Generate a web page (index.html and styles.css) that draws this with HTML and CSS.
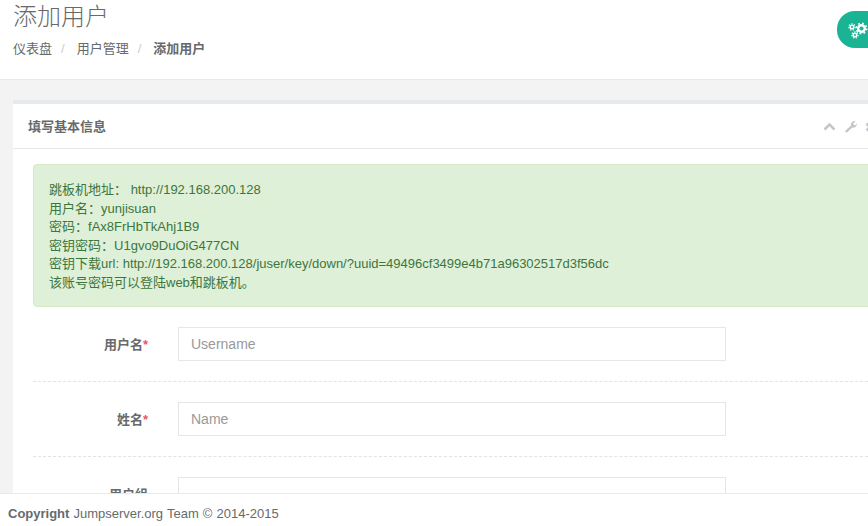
FILE: index.html
```html
<!DOCTYPE html>
<html lang="zh-CN">
<head>
<meta charset="utf-8">
<title>添加用户</title>
<link rel="stylesheet" href="styles.css">
</head>
<body>
<div class="page">
  <header class="heading">
    <h2 class="title">添加用户</h2>
    <ol class="crumbs">
      <li>仪表盘</li>
      <li class="sep">/</li>
      <li>用户管理</li>
      <li class="sep">/</li>
      <li class="current">添加用户</li>
    </ol>
    <div class="gear-btn">
      <svg class="gear-icon" width="20" height="20" viewBox="0 0 20 20">
        <g fill="none" stroke="#fff">
          <circle cx="13.5" cy="8.500" r="3.300" stroke-width="2.400"/>
          <circle cx="13.5" cy="8.500" r="5.200" stroke-width="1.600" stroke-dasharray="1.800 2.280"/>
          <circle cx="4" cy="7" r="1.800" stroke-width="1.400"/>
          <circle cx="4" cy="7" r="3.100" stroke-width="1.200" stroke-dasharray="1.300 1.400"/>
          <circle cx="7" cy="15" r="1.800" stroke-width="1.400"/>
          <circle cx="7" cy="15" r="3.100" stroke-width="1.200" stroke-dasharray="1.300 1.400"/>
        </g>
      </svg>
    </div>
  </header>
  <main class="content">
    <section class="box">
      <div class="box-title">
        <h5>填写基本信息</h5>
        <div class="tools">
          <svg class="tool" width="13" height="9" viewBox="0 0 13 9"><path d="M1.5 7.5 6.5 2.5 11.5 7.5" fill="none" stroke="#c4c6c9" stroke-width="2.6"/></svg>
          <svg class="tool" width="13" height="13" viewBox="0 0 13 13"><path d="M1 12 2 10 7 5.4C6.600 3 8.300.5 11.800 1L9.300 3.300 9.800 4.800 11.300 5.300 13 3.200C13 6.500 10.500 8.300 8.300 7.500L3 12.500Z" fill="#c4c6c9"/></svg>
          <svg class="tool" width="10" height="10" viewBox="0 0 10 10"><path d="M1.500 1.500 8.500 8.500M8.500 1.500 1.500 8.500" fill="none" stroke="#c4c6c9" stroke-width="2.600"/></svg>
        </div>
      </div>
      <div class="box-body">
        <div class="alert">
          <div class="alert-line">跳板机地址<span class="punct">：</span> http://192.168.200.128</div>
          <div class="alert-line">用户名<span class="punct">：</span>yunjisuan</div>
          <div class="alert-line">密码<span class="punct">：</span>fAx8FrHbTkAhj1B9</div>
          <div class="alert-line">密钥密码<span class="punct">：</span>U1gvo9DuOiG477CN</div>
          <div class="alert-line">密钥下载url: http://192.168.200.128/juser/key/down/?uuid=49496cf3499e4b71a96302517d3f56dc</div>
          <div class="alert-line">该账号密码可以登陆web和跳板机<span class="punct">。</span></div>
        </div>
        <form class="form">
          <div class="row">
            <label class="label" for="username">用户名<span class="req">*</span></label>
            <input class="input" id="username" type="text" placeholder="Username">
          </div>
          <div class="row">
            <label class="label" for="name">姓名<span class="req">*</span></label>
            <input class="input" id="name" type="text" placeholder="Name">
          </div>
          <div class="row">
            <label class="label" for="group">用户组</label>
            <input class="input" id="group" type="text">
          </div>
        </form>
      </div>
    </section>
  </main>
  <footer class="footer"><strong>Copyright</strong> Jumpserver.org Team © 2014-2015</footer>
</div>
</body>
</html>
```
FILE: styles.css
```css
* { box-sizing: border-box; }
html, body { margin: 0; height: 100%; overflow: hidden; }
body {
  font-family: "Liberation Sans", "Noto Sans CJK SC", sans-serif;
  font-size: 13px;
  color: #676a6c;
  background: #f3f3f4;
}
.page { height: 526px; width: 868px; display: flex; flex-direction: column; overflow: hidden; }
.heading {
  position: relative;
  flex: none;
  height: 80px;
  padding: 0 13px;
  background: #fff;
  border-bottom: 1px solid #e7eaec;
}
.title { margin: 0; padding-top: 4px; font-size: 24px; line-height: 26px; font-weight: 300; }
.crumbs { list-style: none; margin: 9px 0 0; padding: 0; display: flex; font-size: 13px; line-height: 19px; }
.sep { color: #ccc; margin: 0 12px 0 9px; }
.current { font-weight: 700; }
.gear-btn {
  position: absolute;
  left: 837px;
  top: 11px;
  width: 60px;
  height: 37px;
  border-radius: 18px;
  background: #1ab394;
  display: flex;
  align-items: center;
  padding-left: 11px;
}
.content { flex: 1; min-height: 0; padding: 20px 0 0 13px; overflow: hidden; }
.box { width: 900px; background: #fff; border-top: 4px solid #e7eaec; height: 500px; }
.box-title {
  height: 45px;
  border-bottom: 1px solid #e7eaec;
  padding: 0 15px 2px;
  display: flex;
  align-items: center;
}
.box-title h5 { margin: 0; font-size: 13px; font-weight: 700; color: #676a6c; }
.tools { position: absolute; left: 823px; top: 120px; display: flex; align-items: center; gap: 8px; height: 13px; }
.tool { flex: none; }
.box-body { padding: 15px 20px; }
.alert {
  height: 143px;
  padding: 16px 15px 0;
  background: #dff0d8;
  border: 1px solid #d6e9c6;
  border-radius: 4px;
  color: #3c763d;
  font-size: 13px;
  line-height: 18.600px;
  white-space: nowrap;
}
.alert-line { height: 18.600px; }
.punct { font-family: "Noto Sans CJK JP", sans-serif; line-height: 0; }
.form { margin-top: 20px; }
.row {
  display: grid;
  grid-template-columns: 115px 548px;
  column-gap: 30px;
  align-items: center;
  padding-bottom: 20px;
  margin-bottom: 20px;
  border-bottom: 1px dashed #e2e3e4;
  width: 840px;
}
.label { text-align: right; font-size: 13px; font-weight: 700; position: relative; top: -1px; }
.req { color: #ed5565; }
.input {
  height: 34px;
  width: 548px;
  padding: 6px 12px;
  border: 1px solid #e5e6e7;
  background: #fff;
  font-family: inherit;
  font-size: 14px;
  color: inherit;
  outline: none;
}
.input::placeholder { color: #999; opacity: 1; }
.footer {
  flex: none;
  height: 33px;
  background: #fff;
  border-top: 1px solid #e7eaec;
  padding: 10px 8px 0;
  line-height: 20px;
  word-spacing: .5px;
  position: relative;
}
```
